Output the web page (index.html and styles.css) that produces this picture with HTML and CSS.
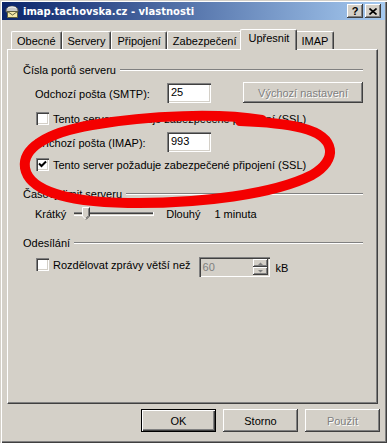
FILE: index.html
```html
<!DOCTYPE html>
<html lang="cs">
<head>
    <meta charset="UTF-8">
    <title>imap.tachovska.cz - vlastnosti</title>
    <link rel="stylesheet" href="styles.css">
</head>
<body>
    <div class="window">
        <div class="titlebar">
            <svg class="title-icon" width="16" height="16" viewBox="0 0 16 16">
                <path d="M2 7 C2 2, 14 2, 14 7 L14 9 L2 9 Z" fill="#c8c8c8" stroke="#505050"/>
                <path d="M4 5 C6 3.5, 10 3.5, 12 5" fill="none" stroke="#fff"/>
                <rect x="3.5" y="8.5" width="10" height="6" fill="#f4e8a8" stroke="#606040"/>
                <path d="M3.5 8.5 L8.5 12 L13.5 8.5" fill="none" stroke="#606040"/>
            </svg>
            <span class="title">imap.tachovska.cz - vlastnosti</span>
            <div class="caption-btns">
                <div class="caption-btn">?</div>
                <div class="caption-btn">
                    <svg width="8" height="7" viewBox="0 0 8 7">
                        <path d="M0.5 0.5 L7.5 6.5 M7.5 0.5 L0.5 6.5" stroke="#000" stroke-width="1.6"/>
                    </svg>
                </div>
            </div>
        </div>

        <div class="tabs">
            <div class="tab">Obecné</div>
            <div class="tab">Servery</div>
            <div class="tab">Připojení</div>
            <div class="tab">Zabezpečení</div>
            <div class="tab selected">Upřesnit</div>
            <div class="tab">IMAP</div>
        </div>

        <div class="panel">
            <div class="group-head">Čísla portů serveru</div>

            <div class="field-row smtp">
                <span class="field-label">Odchozí pošta (SMTP):</span>
                <div class="textbox">25</div>
                <div class="btn wide disabled">Výchozí nastavení</div>
            </div>

            <div class="check-row first">
                <div class="check"></div>
                <span>Tento server požaduje zabezpečené připojení (SSL)</span>
            </div>

            <div class="field-row imap">
                <span class="field-label">Příchozí pošta (IMAP):</span>
                <div class="textbox">993</div>
            </div>

            <div class="check-row second">
                <div class="check checked">
                    <svg width="9" height="9" viewBox="0 0 9 9">
                        <path d="M1 3.5 L3.5 6 L8 1.5" fill="none" stroke="#000" stroke-width="2"/>
                    </svg>
                </div>
                <span>Tento server požaduje zabezpečené připojení (SSL)</span>
            </div>

            <div class="group-head second">Časový limit serveru</div>

            <div class="slider-row">
                <span>Krátký</span>
                <svg class="slider" width="80" height="14" viewBox="0 0 80 14">
                    <rect x="0" y="5" width="80" height="1" fill="#808080"/>
                    <rect x="0" y="6" width="79" height="1" fill="#404040"/>
                    <rect x="0" y="8" width="80" height="1" fill="#fff"/>
                    <rect x="79" y="5" width="1" height="4" fill="#fff"/>
                    <path d="M8 0 H16 V9 L12 13 L8 9 Z" fill="#d4d0c8"/>
                    <path d="M8.5 9 V0.5 H15.5" fill="none" stroke="#fff"/>
                    <path d="M15.5 0.5 V9 L12 12.5" fill="none" stroke="#404040"/>
                    <path d="M14.5 1.5 V8.6 L12 11" fill="none" stroke="#808080"/>
                    <path d="M8.5 9 L11.5 12" fill="none" stroke="#fff"/>
                </svg>
                <span class="long">Dlouhý</span>
                <span class="value">1 minuta</span>
            </div>

            <div class="group-head third">Odesílání</div>

            <div class="split-row">
                <div class="check-row">
                    <div class="check"></div>
                    <span>Rozdělovat zprávy větší než</span>
                </div>
                <div class="spin">
                    <span class="spin-value">60</span>
                    <div class="spin-btns">
                        <div class="spin-btn">
                            <svg width="5" height="3" viewBox="0 0 5 3"><path d="M0 3 H5 L2.5 0.5 Z" fill="#808080"/></svg>
                        </div>
                        <div class="spin-btn">
                            <svg width="5" height="3" viewBox="0 0 5 3"><path d="M0 0 H5 L2.5 2.5 Z" fill="#808080"/></svg>
                        </div>
                    </div>
                </div>
                <span class="unit">kB</span>
            </div>
        </div>

        <div class="footer">
            <div class="btn default">OK</div>
            <div class="btn">Storno</div>
            <div class="btn disabled">Použít</div>
        </div>

        <svg class="scribble" width="387" height="443" viewBox="0 0 387 443">
            <path d="M262 120 C220 113, 150 115, 92 125 C45 133, 22 149, 25 168 C29 191, 68 202, 128 203 C200 204, 275 194, 312 175 C338 160, 337 137, 302 128 C286 124, 268 122, 240 121"
                  fill="none" stroke="#f40000" stroke-width="10" stroke-linecap="round"/>
        </svg>
    </div>
</body>
</html>
```

FILE: styles.css
```css
body {
    margin: 0;
    background: #d4d0c8;
    font-family: "Liberation Sans", Arial, sans-serif;
    font-size: 11px;
    color: #000;
}
.window {
    position: relative;
    width: 387px;
    height: 443px;
    box-sizing: border-box;
    padding: 2px;
    background: #d4d0c8;
    box-shadow: inset 1px 1px #d4d0c8, inset 2px 2px #fff, inset -1px -1px #404040, inset -2px -2px #808080;
}
.titlebar {
    height: 18px;
    display: flex;
    align-items: center;
    padding: 0 4px 0 2px;
    background: linear-gradient(to right, #0a246a, #a6caf0);
    color: #fff;
    font-family: "DejaVu Sans", Verdana, sans-serif;
    font-size: 10px;
    font-weight: bold;
}
.title-icon {
    margin-right: 3px;
}
.caption-btns {
    margin-left: auto;
    display: flex;
    gap: 2px;
}
.caption-btn {
    width: 16px;
    height: 14px;
    box-sizing: border-box;
    display: flex;
    align-items: center;
    justify-content: center;
    background: #d4d0c8;
    color: #000;
    font-family: "Liberation Sans", Arial, sans-serif;
    font-size: 11px;
    font-weight: bold;
    box-shadow: inset -1px -1px #404040, inset 1px 1px #fff, inset -2px -2px #808080;
}
.tabs {
    display: flex;
    align-items: flex-end;
    height: 20px;
    margin: 9px 0 0 9px;
    position: relative;
    z-index: 1;
}
.tab {
    height: 18px;
    box-sizing: border-box;
    padding: 1px 5px 0;
    line-height: 16px;
    border-top: 1px solid #fff;
    border-left: 1px solid #fff;
    border-right: 1px solid #404040;
    border-radius: 2px 2px 0 0;
    box-shadow: inset -1px 0 #808080;
    background: #d4d0c8;
}
.tab.selected {
    height: 21px;
    margin: 0 -2px -1px;
    padding: 0 7px;
    position: relative;
    z-index: 2;
}
.panel {
    margin: 0 7px 0 5px;
    height: 355px;
    box-sizing: border-box;
    border-top: 1px solid #fff;
    border-left: 1px solid #fff;
    border-right: 1px solid #404040;
    border-bottom: 1px solid #404040;
    box-shadow: inset -1px -1px #808080;
    padding: 0 14px 0 15px;
}
.group-head {
    display: flex;
    align-items: center;
    height: 13px;
    margin-top: 13px;
}
.group-head::after {
    content: "";
    flex: 1;
    margin-left: 4px;
    border-top: 1px solid #808080;
    border-bottom: 1px solid #fff;
}
.group-head.second {
    margin-top: 16px;
}
.group-head.third {
    margin-top: 15px;
}
.field-row {
    display: flex;
    align-items: center;
    padding-left: 12px;
}
.field-row.smtp {
    height: 21px;
    margin-top: 6px;
}
.field-row.imap {
    height: 20px;
    margin-top: 7px;
}
.field-label {
    width: 132px;
    padding-top: 2px;
}
.textbox {
    width: 44px;
    height: 20px;
    box-sizing: border-box;
    padding: 3px 0 0 4px;
    background: #fff;
    box-shadow: inset 1px 1px #808080, inset 2px 2px #404040, inset -1px -1px #fff, inset -2px -2px #d4d0c8;
}
.btn {
    width: 75px;
    height: 23px;
    box-sizing: border-box;
    display: flex;
    align-items: center;
    justify-content: center;
    background: #d4d0c8;
    box-shadow: inset -1px -1px #404040, inset 1px 1px #fff, inset -2px -2px #808080;
}
.btn.wide {
    width: 120px;
    height: 21px;
    margin-left: 32px;
}
.btn.default {
    box-shadow: inset 1px 1px #000, inset -1px -1px #000, inset 2px 2px #fff, inset -2px -2px #404040, inset -3px -3px #808080;
}
.btn.disabled {
    color: #808080;
    text-shadow: 1px 1px #fff;
}
.check-row {
    display: flex;
    align-items: center;
    padding-left: 13px;
    height: 13px;
}
.check-row.first {
    margin-top: 9px;
}
.check-row.second {
    margin-top: 6px;
}
.check {
    width: 13px;
    height: 13px;
    box-sizing: border-box;
    margin-right: 4px;
    display: flex;
    align-items: center;
    justify-content: center;
    background: #fff;
    box-shadow: inset 1px 1px #808080, inset 2px 2px #404040, inset -1px -1px #fff, inset -2px -2px #d4d0c8;
}
.slider-row {
    display: flex;
    align-items: center;
    height: 14px;
    margin-top: 7px;
    padding-left: 12px;
}
.slider {
    margin-left: 8px;
}
.slider-row .long {
    margin-left: 12px;
}
.slider-row .value {
    margin-left: 14px;
}
.split-row {
    display: flex;
    align-items: flex-start;
    height: 20px;
    margin-top: 8px;
}
.split-row .check-row {
    margin-top: 1px;
}
.spin {
    width: 71px;
    height: 20px;
    box-sizing: border-box;
    margin-left: 8px;
    padding: 2px;
    display: flex;
    align-items: center;
    background: #d4d0c8;
    box-shadow: inset 1px 1px #808080, inset 2px 2px #404040, inset -1px -1px #fff, inset -2px -2px #d4d0c8;
}
.spin-value {
    flex: 1;
    padding-left: 2px;
    color: #808080;
}
.spin-btns {
    display: flex;
    flex-direction: column;
    width: 15px;
    height: 16px;
}
.spin-btn {
    flex: 1;
    display: flex;
    align-items: center;
    justify-content: center;
    box-shadow: inset -1px -1px #404040, inset 1px 1px #fff, inset -2px -2px #808080;
}
.unit {
    align-self: center;
    margin-left: 6px;
    padding-top: 2px;
}
.footer {
    display: flex;
    justify-content: flex-end;
    gap: 7px;
    padding: 5px 5px 0 0;
}
.scribble {
    position: absolute;
    top: 0;
    left: 0;
    pointer-events: none;
    filter: blur(0.6px);
}
```
